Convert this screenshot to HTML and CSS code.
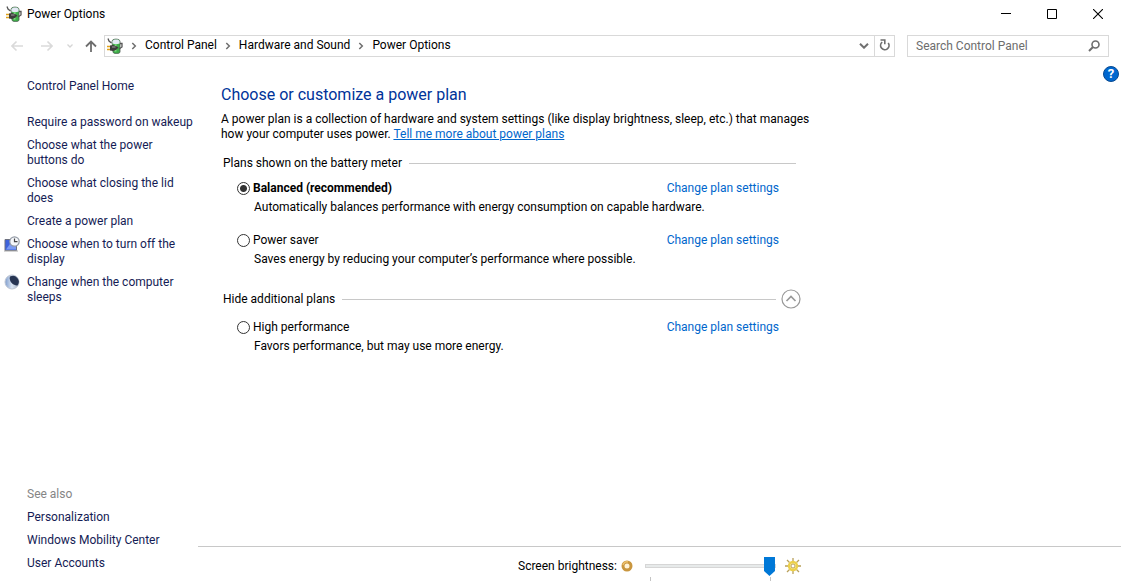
FILE: index.html
```html
<!DOCTYPE html>
<html lang="en">
<head>
<meta charset="utf-8">
<title>Power Options</title>
<link rel="stylesheet" href="styles.css">
</head>
<body>
<svg class="defs" aria-hidden="true">
  <symbol id="battery" viewBox="0 0 16 16">
    <path d="M5 3.500C5 .3 13 .3 13 3.500V14C13 16 6 16 6 14Z" fill="#3fae49" stroke="#4b5a50" stroke-width=".8"/>
    <path d="M5.400 3.400C6 .9 12.400 .9 12.600 3.400V5.500C10 6.600 7.500 6.300 5.400 5.500Z" fill="#e4e9f6"/>
    <path d="M8.500 6.500V13.500" stroke="#8be58a" stroke-width="1.800"/>
    <path d="M1 .5 2 3 4.500 5M13 5.500H15V9L12 11" fill="none" stroke="#555" stroke-width="1.300"/>
    <path d="M0 8.500H4M0 11.500H4" stroke="#e0a21c" stroke-width="1.400"/>
    <path d="M3 7.500 6 7 9 8 11.500 9.500 9 12 6 13 3 12.500Z" fill="#3c3c3c"/>
    <path d="M5 9H8.500" stroke="#8c8c8c" stroke-width="1.200"/>
  </symbol>
  <symbol id="crumb" viewBox="0 0 6 8"><path d="M1.300 1 4.300 4 1.300 7" fill="none" stroke="#6e6e6e" stroke-width="1.500"/></symbol>
</svg>

<header class="titlebar">
  <svg class="app-icon"><use href="#battery"/></svg>
  <h1 class="window-title">Power Options</h1>
  <div class="window-buttons">
    <button class="window-button" aria-label="Minimize"><svg width="10" height="10"><path d="M0 4.500H10" stroke="#000"/></svg></button>
    <button class="window-button" aria-label="Maximize"><svg width="10" height="10"><path d="M.5 .5H9.500V9.500H.5Z" fill="none" stroke="#000"/></svg></button>
    <button class="window-button" aria-label="Close"><svg width="10" height="10"><path d="M0 0 10 10M10 0 0 10" stroke="#000" stroke-width="1.100"/></svg></button>
  </div>
</header>

<nav class="navbar" aria-label="Location">
  <div class="history">
    <button class="icon-button arrow" aria-label="Back"><svg width="12" height="12"><path d="M12 6H1M5.500 1.500 1 6 5.500 10.500" fill="none" stroke="#dadada" stroke-width="1.600"/></svg></button>
    <button class="icon-button arrow" aria-label="Forward"><svg width="12" height="12"><path d="M0 6H11M6.500 1.500 11 6 6.500 10.500" fill="none" stroke="#dadada" stroke-width="1.600"/></svg></button>
    <button class="icon-button recent" aria-label="Recent locations"><svg width="6" height="4"><path d="M.5 .5 3 3 5.500 .5" fill="none" stroke="#d5d5d5" stroke-width="1.300"/></svg></button>
    <button class="icon-button up" aria-label="Up"><svg width="12" height="12"><path d="M6 12V1.500M1 6.500 6 1.500 11 6.500" fill="none" stroke="#6e6e6e" stroke-width="1.800"/></svg></button>
  </div>
  <div class="address">
    <svg class="app-icon"><use href="#battery"/></svg>
    <svg class="crumb-arrow"><use href="#crumb"/></svg>
    <a class="crumb" href="#">Control Panel</a>
    <svg class="crumb-arrow"><use href="#crumb"/></svg>
    <a class="crumb" href="#">Hardware and Sound</a>
    <svg class="crumb-arrow"><use href="#crumb"/></svg>
    <a class="crumb" href="#">Power Options</a>
    <button class="icon-button expand" aria-label="Previous locations"><svg width="10" height="6"><path d="M1 .7 5 4.700 9 .7" fill="none" stroke="#707070" stroke-width="2"/></svg></button>
    <button class="icon-button refresh" aria-label="Refresh"><svg width="12" height="13"><path d="M3.200 3.200A4.200 4.200 0 1 0 9.200 4" fill="none" stroke="#6e6e6e" stroke-width="1.700"/><path d="M1.500 1H5.800V5.200" fill="none" stroke="#6e6e6e" stroke-width="1.600"/></svg></button>
  </div>
  <form class="search">
    <input class="search-input" type="search" placeholder="Search Control Panel" aria-label="Search Control Panel">
    <button class="icon-button" type="button" aria-label="Search"><svg width="12" height="12"><circle cx="7.500" cy="4.500" r="3.500" fill="none" stroke="#6e6e6e" stroke-width="1.600"/><path d="M5 7 1 11" stroke="#6e6e6e" stroke-width="2"/></svg></button>
  </form>
</nav>

<div class="workspace">
  <aside class="sidebar">
    <a class="side-link home" href="#">Control Panel Home</a>
    <a class="side-link" href="#">Require a password on wakeup</a>
    <a class="side-link" href="#">Choose what the power buttons do</a>
    <a class="side-link" href="#">Choose what closing the lid does</a>
    <a class="side-link" href="#">Create a power plan</a>
    <a class="side-link" href="#">
      <svg class="side-icon" viewBox="0 0 16 16"><path d="M1 3.500H12.500V14.500H1Z" fill="#3e63dc" stroke="#6d7180"/><path d="M2 13.500 8 5H12V13.500Z" fill="#7b9bf4"/><path d="M0 15H14" stroke="#aaa"/><circle cx="10.500" cy="5.500" r="4.700" fill="#f5f7fa" stroke="#939aa5" stroke-width="1.200"/><path d="M10.500 2.500V5.700H13.500" fill="none" stroke="#444" stroke-width="1.200"/></svg>
      Choose when to turn off the display</a>
    <a class="side-link" href="#">
      <svg class="side-icon" viewBox="0 0 16 16"><defs><linearGradient id="moon"><stop stop-color="#7d9ccd"/><stop offset=".5" stop-color="#dce6f4"/><stop offset="1" stop-color="#9aa8bd"/></linearGradient></defs><circle cx="8" cy="8" r="7" fill="url(#moon)" stroke="#bec6d3"/><path d="M6 2.500A6 6 0 0 1 13.500 11.500C9 12 4.500 7 6 2.500Z" fill="#273553"/></svg>
      Change when the computer sleeps</a>
    <div class="see-also">
      <h2 class="see-title">See also</h2>
      <a class="side-link" href="#">Personalization</a>
      <a class="side-link" href="#">Windows Mobility Center</a>
      <a class="side-link" href="#">User Accounts</a>
    </div>
  </aside>

  <main class="main">
    <button class="help" aria-label="Help">?</button>
    <div class="content">
      <h2 class="heading">Choose or customize a power plan</h2>
      <p class="intro">A power plan is a collection of hardware and system settings (like display brightness, sleep, etc.) that manages how your computer uses power. <a class="intro-link" href="#">Tell me more about power plans</a></p>

      <section class="group">
        <h3 class="group-title">Plans shown on the battery meter</h3>
        <div class="plan">
          <input class="radio" type="radio" name="plan" id="balanced" checked>
          <label class="plan-name selected" for="balanced">Balanced (recommended)</label>
          <a class="plan-link" href="#">Change plan settings</a>
          <p class="plan-note">Automatically balances performance with energy consumption on capable hardware.</p>
        </div>
        <div class="plan">
          <input class="radio" type="radio" name="plan" id="saver">
          <label class="plan-name" for="saver">Power saver</label>
          <a class="plan-link" href="#">Change plan settings</a>
          <p class="plan-note">Saves energy by reducing your computer’s performance where possible.</p>
        </div>
      </section>

      <section class="group">
        <div class="group-row">
          <h3 class="group-title">Hide additional plans</h3>
          <button class="collapse" aria-label="Hide additional plans"><svg width="20" height="20"><circle cx="10" cy="10" r="9" fill="none" stroke="#999" stroke-width="1.200"/><path d="M5.500 12 10 7.500 14.500 12" fill="none" stroke="#999" stroke-width="1.700"/></svg></button>
        </div>
        <div class="plan">
          <input class="radio" type="radio" name="plan" id="high">
          <label class="plan-name" for="high">High performance</label>
          <a class="plan-link" href="#">Change plan settings</a>
          <p class="plan-note">Favors performance, but may use more energy.</p>
        </div>
      </section>
    </div>

    <footer class="brightness">
      <label class="brightness-label" for="level">Screen brightness:</label>
      <svg width="12" height="12"><circle cx="6" cy="6" r="4" fill="#fff3d8" stroke="#c9963f" stroke-width="3"/><path d="M2 5A4 4 0 0 1 7 2" fill="none" stroke="#ecc06d" stroke-width="1.500"/></svg>
      <div class="slider-box">
        <input class="slider" type="range" id="level" min="0" max="100" value="100">
        <div class="ticks"></div>
      </div>
      <svg width="16" height="16"><path d="M8 0V3M8 13V16M0 8H3M13 8H16M2 2 4.500 4.500M11.500 11.500 14 14M14 2 11.500 4.500M4.500 11.500 2 14" stroke="#b9a05a" stroke-width="1.300"/><circle cx="8" cy="8" r="4" fill="#fff6b8" stroke="#ecd04a" stroke-width="2.400"/><circle cx="8" cy="8" r="2" fill="#fff" stroke="#a98a39" stroke-width=".8"/></svg>
    </footer>
  </main>
</div>
</body>
</html>
```
FILE: styles.css
```css
* { box-sizing: border-box; }

body {
  margin: 0;
  min-height: 100vh;
  display: flex;
  flex-direction: column;
  background: #fff;
  color: #000;
  font: 12px/15px Roboto, "Open Sans", sans-serif;
}

h1, h2, h3, p { margin: 0; font-size: 12px; font-weight: 400; }
a { color: inherit; text-decoration: none; }
button { border: 0; padding: 0; background: none; font: inherit; }
svg { display: block; flex: none; }
.defs { position: absolute; width: 0; height: 0; }
.app-icon { width: 16px; height: 16px; }

.titlebar { display: flex; align-items: center; gap: 5px; height: 27px; padding-left: 6px; }
.window-title { padding-top: 2px; }
.window-buttons { display: flex; margin-left: auto; }
.window-button { display: grid; place-items: center; width: 46px; height: 26px; }

.navbar { display: flex; align-items: center; height: 37px; padding: 0 12px 0 11px; }
.history { display: flex; align-items: center; width: 93px; }
.icon-button { display: grid; place-items: center; flex: none; }
.arrow { width: 12px; margin-right: 18px; }
.recent { width: 6px; margin-right: 12px; margin-left: -4px; }
.address, .search { display: flex; align-items: center; height: 22px; border: 1px solid #d9d9d9; }
.address { flex: 1; padding-left: 2px; }
.crumb-arrow { width: 6px; height: 8px; margin: 0 8px; }
.expand { width: 20px; height: 20px; margin-left: auto; }
.refresh { width: 20px; height: 20px; border-left: 1px solid #d9d9d9; }
.search { width: 202px; margin-left: 12px; padding: 0 8px; }
.search-input { flex: 1; min-width: 0; border: 0; padding: 1px 0 0; outline: 0; background: none; font: inherit; }
.search-input::placeholder { color: #6d6d6d; }

.workspace { display: flex; flex: 1; }

.sidebar {
  display: flex;
  flex-direction: column;
  gap: 8px;
  width: 198px;
  padding: 15px 4px 12px 27px;
  color: #151c55;
}
.side-link { position: relative; display: block; }
.home { margin-bottom: 13px; }
.side-icon { position: absolute; left: -23px; top: -1px; width: 16px; height: 16px; }
.see-also { display: flex; flex-direction: column; gap: 8px; margin-top: auto; }
.see-title { color: #858585; }

.main { position: relative; display: flex; flex: 1; flex-direction: column; }
.help {
  position: absolute;
  top: 2px;
  right: 2px;
  width: 16px;
  height: 16px;
  border: 1px solid #084a91;
  border-radius: 50%;
  background: #0067cf;
  color: #fff;
  font-size: 13px;
  font-weight: 700;
  line-height: 14px;
}
.content { flex: 1; max-width: 616px; padding: 20px 0 20px 23px; }
.heading { color: #003399; font-size: 16px; line-height: 22px; }
.intro { margin-top: 6px; }
.intro-link { color: #0066cc; text-decoration: underline; }

.group { padding: 14px 13px 0 2px; }
.group-title { display: flex; flex: 1; align-items: center; gap: 7px; padding-right: 5px; }
.group-title::after { content: ""; flex: 1; height: 1px; background: #c8c8c8; }
.group-row { display: flex; align-items: center; height: 20px; margin-bottom: 1px; }
.plan {
  display: grid;
  grid-template-columns: 13px 1fr auto;
  column-gap: 3px;
  row-gap: 4px;
  align-items: center;
  padding: 10px 22px 8px 14px;
}
.radio {
  appearance: none;
  width: 13px;
  height: 13px;
  margin: 0;
  border: 1px solid #333;
  border-radius: 50%;
}
.radio:checked { background: radial-gradient(circle, #333 3px, #fff 4px); }
.selected { font-weight: 700; }
.plan-link { color: #0066cc; }
.plan-note { grid-column: 2 / -1; padding-left: 1px; }

.brightness {
  display: flex;
  align-items: center;
  height: 37px;
  padding: 2px 0 0 320px;
  border-top: 1px solid #c8c8c8;
}
.brightness-label { margin-right: 4px; }
.slider-box { position: relative; width: 131px; height: 20px; margin: 0 9px 0 12px; }
.slider { appearance: none; display: block; width: 100%; height: 20px; margin: 0; background: none; }
.slider::-webkit-slider-runnable-track { height: 4px; border: 1px solid #d6d6d6; background: #e7eaea; }
.slider::-webkit-slider-thumb {
  appearance: none;
  width: 11px;
  height: 19px;
  margin-top: -8px;
  background: #0078d7;
  clip-path: polygon(0 0, 100% 0, 100% 74%, 50% 100%, 0 74%);
}
.ticks {
  position: absolute;
  top: 21px;
  left: 5px;
  right: 5px;
  height: 4px;
  border: solid #c4c4c4;
  border-width: 0 1px;
}
```
